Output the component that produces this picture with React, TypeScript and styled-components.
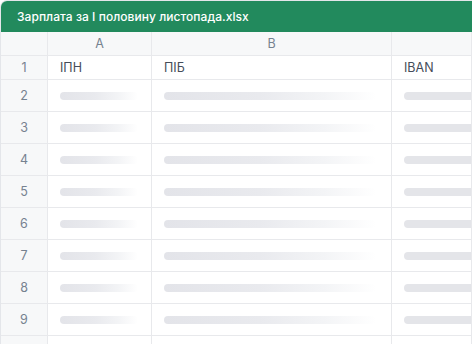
import React from 'react';
import styled, { createGlobalStyle } from 'styled-components';

const GlobalStyle = createGlobalStyle`
  html, body {
    margin: 0;
    padding: 0;
    background: #fff;
  }
  body {
    font-family: Inter, "Noto Sans", sans-serif;
    -webkit-font-smoothing: antialiased;
  }
`;

const Sheet = styled.section`
  width: 472px;
  height: 344px;
  overflow: hidden;
  border-top-left-radius: 7px;
  border-top: 1px solid #e4e6ea;
  border-left: 1px solid #e4e6ea;
  box-sizing: border-box;
  background: #fff;
`;

const TitleBar = styled.header`
  height: 31px;
  display: flex;
  align-items: center;
  padding-left: 16px;
  background: #228a5d;
  color: #fff;
  font-size: 12px;
  font-weight: 500;
  letter-spacing: 0.05px;
`;

const Grid = styled.div`
  display: grid;
  grid-template-columns: 47px 104px 240px 1fr;
  grid-template-rows: 24px 24px;
  grid-auto-rows: 32px;
`;

const Cell = styled.div<{ $head?: boolean; $center?: boolean }>`
  display: flex;
  align-items: center;
  justify-content: ${(p) => (p.$center ? 'center' : 'flex-start')};
  padding: ${(p) => (p.$center ? '0' : '0 12px')};
  border-right: 1px solid #e8e9ec;
  border-bottom: 1px solid #e8e9ec;
  background: ${(p) => (p.$head ? '#f7f8f9' : '#fff')};
  color: ${(p) => (p.$head ? '#768290' : '#454d59')};
  font-size: 12.5px;
  overflow: hidden;
  white-space: nowrap;
`;

const Bar = styled.div<{ $width: number; $fade?: boolean }>`
  width: ${(p) => p.$width}px;
  height: 8px;
  border-radius: 4px;
  flex-shrink: 0;
  background: ${(p) =>
    p.$fade
      ? 'linear-gradient(90deg, #e3e4e9 0%, #e9eaee 45%, #f3f4f6 75%, rgba(246,247,248,0) 100%)'
      : '#e4e5e9'};
`;

const rows = [2, 3, 4, 5, 6, 7, 8, 9, 10];

function App(): JSX.Element {
  return (
    <>
      <GlobalStyle />
      <Sheet>
        <TitleBar>Зарплата за І половину листопада.xlsx</TitleBar>
        <Grid>
          <Cell $head $center />
          <Cell $head $center>A</Cell>
          <Cell $head $center>B</Cell>
          <Cell $head $center />

          <Cell $head $center>1</Cell>
          <Cell>ІПН</Cell>
          <Cell>ПІБ</Cell>
          <Cell>IBAN</Cell>

          {rows.map((n) => (
            <React.Fragment key={n}>
              <Cell $head $center>{n < 10 ? n : ''}</Cell>
              <Cell>{n < 10 && <Bar $width={78} $fade />}</Cell>
              <Cell>{n < 10 && <Bar $width={212} $fade />}</Cell>
              <Cell>{n < 10 && <Bar $width={120} />}</Cell>
            </React.Fragment>
          ))}
        </Grid>
      </Sheet>
    </>
  );
}

export default App;
